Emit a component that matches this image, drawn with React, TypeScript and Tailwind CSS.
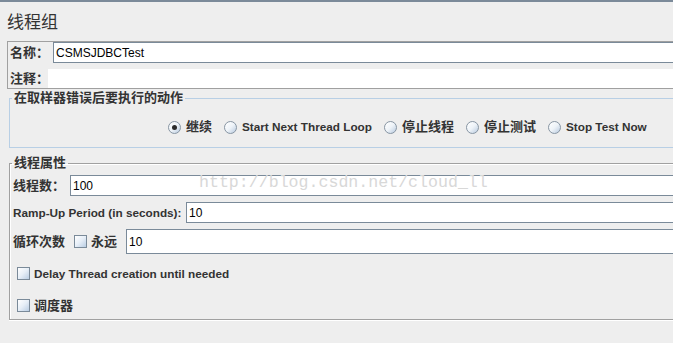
import React from "react";

const sans = { fontFamily: '"Liberation Sans", "Noto Sans CJK SC", Arial, sans-serif' };

function Radio({ checked }: { checked?: boolean }) {
  return (
    <span className="flex h-[13px] w-[13px] shrink-0 items-center justify-center rounded-full border border-[#8795a3] bg-linear-to-br from-white via-[#eef3f8] to-[#b9cbe0]">
      {checked && <span className="h-[5px] w-[5px] rounded-full bg-[#2b2b2b]" />}
    </span>
  );
}

function Check() {
  return (
    <span className="block h-[13px] w-[13px] shrink-0 border border-[#7a8a99] bg-linear-to-br from-white via-[#e6eef7] to-[#b9cde3]" />
  );
}

function RadioItem({ label, checked, cjk }: { label: string; checked?: boolean; cjk?: boolean }) {
  return (
    <div className="flex items-center gap-[5px]">
      <Radio checked={checked} />
      <span className={`${cjk ? "text-[13px]" : "text-[11.75px]"} font-bold text-[#333] whitespace-nowrap leading-[16px]`}>{label}</span>
    </div>
  );
}

export default function App() {
  return (
    <div className="relative h-[343px] w-[673px] overflow-hidden border-t-2 border-[#7b8a99] bg-[#eeeeee]" style={sans}>
      <div className="w-[820px]">
        <div className="flex h-[39px] items-center pl-[7px] pt-[2px] text-[17px] text-[#333]">线程组</div>

        <div className="ml-[7px] border border-[#a0a0a0]">
          <div className="flex h-[21px] items-center">
            <span className="w-[45px] shrink-0 whitespace-nowrap pl-[2px] text-[13px] font-bold text-[#333] leading-[16px]">名称：</span>
            <div className="flex h-[21px] flex-1 items-center border border-[#7a8a99] bg-white pl-[2px] text-[12px] text-black">
              CSMSJDBCTest
            </div>
          </div>
          <div className="mt-[6px] flex h-[19px] items-center">
            <span className="w-[40px] shrink-0 whitespace-nowrap pl-[2px] text-[13px] font-bold text-[#333] leading-[16px]">注释：</span>
            <div className="relative h-[19px] flex-1 bg-white" />
          </div>
        </div>

        <fieldset className="ml-[9px] mt-[1px] border border-[#b8cfe5] pb-[12px] pt-[13px]">
          <legend className="ml-[2px] px-[2px] text-[13px] font-bold leading-[16px] text-[#333]">在取样器错误后要执行的动作</legend>
          <div className="flex h-[16px] items-center gap-[12px] pl-[158px]">
            <RadioItem label="继续" checked cjk />
            <RadioItem label="Start Next Thread Loop" />
            <RadioItem label="停止线程" cjk />
            <RadioItem label="停止测试" cjk />
            <RadioItem label="Stop Test Now" />
          </div>
        </fieldset>

        <fieldset className="ml-[9px] mt-[7px] border border-[#a0a0a0] pb-[7px] shadow-[inset_1px_1px_0_#ffffff,0_1px_0_#ffffff]">
          <legend className="ml-[2px] px-[2px] text-[13px] font-bold leading-[16px] text-[#333]">线程属性</legend>
          <div className="mt-[4px] flex h-[21px] items-center pl-[3px]">
            <span className="w-[57px] shrink-0 whitespace-nowrap text-[13px] font-bold text-[#333] leading-[16px]">线程数：</span>
            <div className="flex h-[21px] flex-1 items-center border border-[#7a8a99] bg-white pl-[2px] text-[12px] text-black">100</div>
          </div>
          <div className="mt-[6px] flex h-[21px] items-center pl-[3px]">
            <span className="w-[173px] shrink-0 whitespace-nowrap text-[11.75px] font-bold text-[#333]">Ramp-Up Period (in seconds):</span>
            <div className="flex h-[21px] flex-1 items-center border border-[#7a8a99] bg-white pl-[2px] text-[12px] text-black">10</div>
          </div>
          <div className="mt-[6px] flex h-[25px] items-center pl-[3px]">
            <span className="w-[61px] shrink-0 whitespace-nowrap text-[13px] font-bold text-[#333] leading-[16px]">循环次数</span>
            <Check />
            <span className="ml-[4px] w-[35px] shrink-0 whitespace-nowrap text-[13px] font-bold text-[#333] leading-[16px]">永远</span>
            <div className="flex h-[25px] flex-1 items-center border border-[#7a8a99] bg-white pl-[2px] text-[12px] text-black">10</div>
          </div>
          <div className="mt-[13px] flex h-[13px] items-center pl-[7px]">
            <Check />
            <span className="ml-[4px] whitespace-nowrap text-[11.75px] font-bold text-[#333]">Delay Thread creation until needed</span>
          </div>
          <div className="mt-[19px] flex h-[13px] items-center pl-[7px]">
            <Check />
            <span className="ml-[4px] text-[13px] font-bold text-[#333] leading-[16px]">调度器</span>
          </div>
        </fieldset>
      </div>

      <div
        className="pointer-events-none absolute left-[199px] top-[171px] z-10 whitespace-nowrap text-[16.6px] leading-[20px] text-[#d8d8d8]"
        style={{ fontFamily: '"Liberation Mono", "Courier New", monospace' }}
      >
        http://blog.csdn.net/cloud_ll
      </div>
    </div>
  );
}
